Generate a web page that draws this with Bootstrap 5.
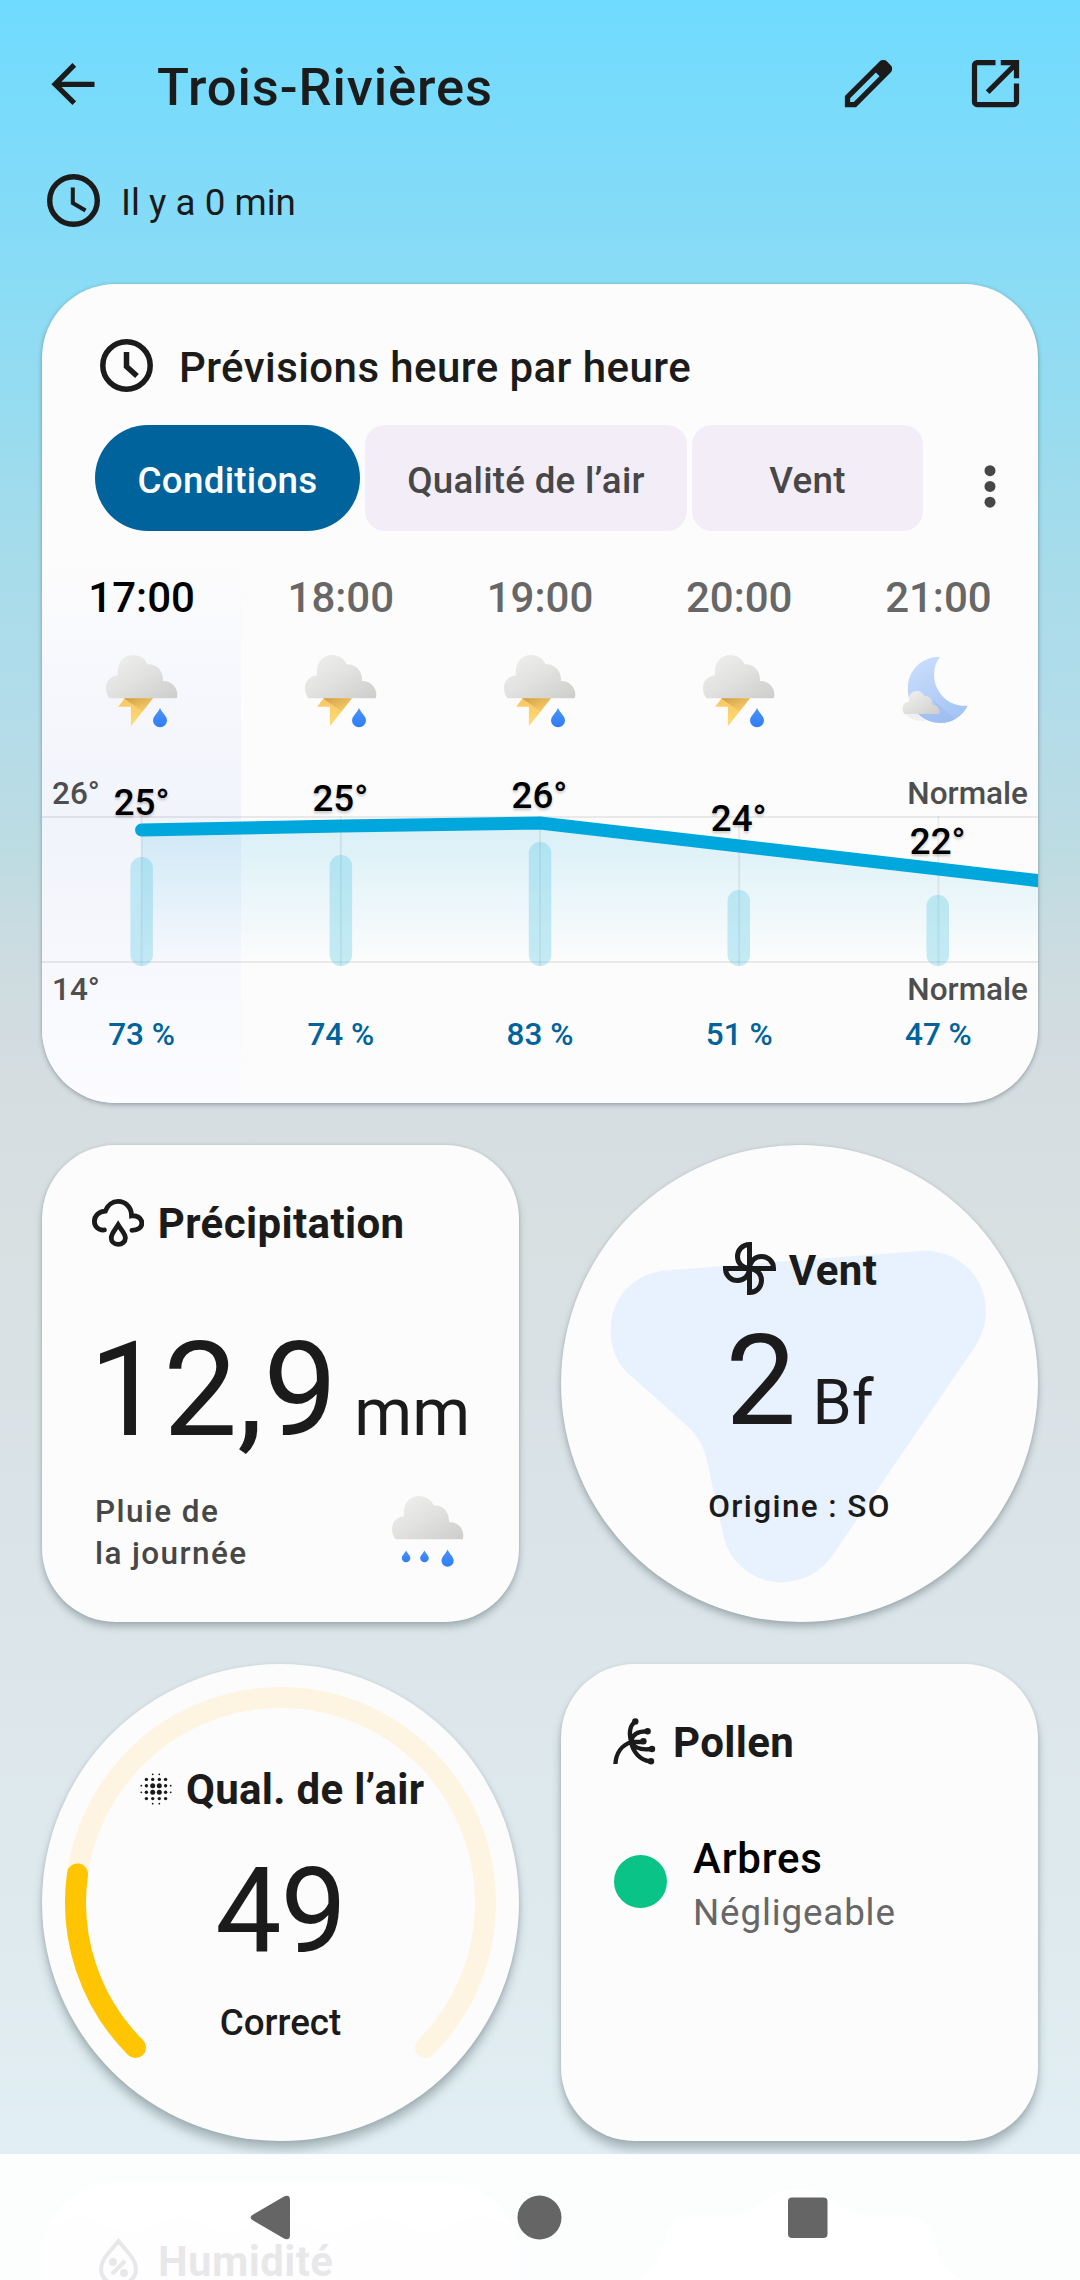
<!DOCTYPE html>
<html lang="fr">
<head>
<meta charset="utf-8">
<meta name="viewport" content="width=device-width, initial-scale=1">
<title>Trois-Rivières</title>
<link href="https://cdn.jsdelivr.net/npm/bootstrap@5.3.0/dist/css/bootstrap.min.css" rel="stylesheet">
<style>
body{margin:0;font-family:Roboto,"Noto Sans",sans-serif;color:#1b1b1b;background:#e2eef3}
.screen{width:1080px;height:2280px;background:linear-gradient(180deg,#6fdbff 0,#7cdbfa 125px,#8cdcf5 300px,#97dcf0 410px,#a7dcea 560px,#b3dcea 710px,#bedce2 860px,#cddce1 960px,#d5dde0 1080px,#d8e0e2 1250px,#dae3e7 1500px,#dce6ea 1660px,#e1eef3 2154px)}
svg{display:block;flex:none}
.fw-md{font-weight:500}
.topbar{padding:52px 53px 0 42px;height:116px}
.page-name{font-size:52.5px;line-height:63px;margin-left:52px;padding-top:4px;letter-spacing:.9px}
.stamp{padding-left:47px;margin-top:58px;height:53px}
.stamp span{font-size:36.75px;line-height:58px;margin-left:21px}
.tile{background:#fcfcfc;border-radius:73.5px;box-shadow:0 2px 5px rgba(70,90,95,.38),0 0 3px rgba(70,90,95,.2)}
.tile-low{box-shadow:0 9px 10px rgba(70,90,95,.34),0 1px 4px rgba(70,90,95,.2)}
.tile-mid{box-shadow:0 5px 7px rgba(70,90,95,.36),0 0 3px rgba(70,90,95,.18)}
.hourly{margin:57px 42px 0;height:819px;padding-top:55px}
.hourly-title{font-size:42px;line-height:57px;margin-left:26px;letter-spacing:.43px}
.tabs-row{margin-top:29px;padding-left:53px;gap:5px;height:106px}
.tab-btn{background:#f2edf7;color:#474747;border-radius:20px;height:106px;font-size:36.75px;letter-spacing:.26px}
.tab-btn span{display:block;padding-top:5px}
.tab-btn.on{background:#00639b;color:#fff;border-radius:53px}
.w-a{width:265px}.w-b{width:322px}.w-c{width:231px}
.kebab{margin-left:52px}
.hours{height:572px}
.hour-col{color:#676767}
.hour-col:first-child{color:#000;background:linear-gradient(180deg,rgba(241,245,253,0) 5%,#f7f8fd 25%,#f1f4fb 52%,#f7f8fd 76%,#fcfcff 100%);border-radius:0 0 0 73.5px}
.hour-lbl{font-size:42px;line-height:50px;margin:42px 0 32px}
.pop{font-size:31.5px;line-height:38px;margin-top:288px;color:#00639b}
.chart text{font-family:Roboto,sans-serif;font-weight:500}
.deg{font-size:36.75px;text-shadow:0 2px 3px rgba(0,0,0,.22)}
.lim{font-size:31.5px;fill:#4e4e4e}
.tiles{margin:42px 42px 0;display:grid;grid-template-columns:477px 477px;gap:42px}
.sq{height:477px}
.head{font-size:42px;font-weight:700;line-height:50px;letter-spacing:.38px}
.big{font-size:132px;line-height:132px}
.unit{font-size:63px;line-height:0}
.round-tile{border-radius:50%}
.sub{font-size:31.5px;letter-spacing:1.4px}
.pad-rain{padding:54px 55px 0 50px}
.pad-wind{padding-top:97px}
.pad-aqi{padding-top:101px}
.pad-pol{padding:54px 0 0 52px}
.dot-lvl{width:53px;height:53px;border-radius:50%;background:#0ac386;margin:22px 26px 0 1px}
.lvl-name{font-size:42px;line-height:50px;color:#000;letter-spacing:.8px;margin-top:1px}
.lvl-val{font-size:36.75px;line-height:44px;margin-top:7px;color:#676767;letter-spacing:.85px}
.navi{height:126px;background:rgba(255,255,255,.9)}
</style>
</head>
<body>
<svg width="0" height="0" class="position-absolute">
<defs>
<linearGradient id="gc" x1="0" y1="0" x2="1" y2="1"><stop offset="0" stop-color="#f1f1f0"/><stop offset=".5" stop-color="#e1e1e0"/><stop offset="1" stop-color="#cdcdcb"/></linearGradient>
<linearGradient id="gd" x1="0" y1="0" x2="0" y2="1"><stop offset="0" stop-color="#4c93f7"/><stop offset="1" stop-color="#2f7df6"/></linearGradient>
<linearGradient id="gb" x1="0" y1="0" x2="0" y2="1"><stop offset="0" stop-color="#f9c665"/><stop offset="1" stop-color="#ffdc74"/></linearGradient>
<linearGradient id="gs" x1="0" y1="0" x2="1" y2="1"><stop offset="0" stop-color="#c89a45"/><stop offset="1" stop-color="#f6c966" stop-opacity=".3"/></linearGradient>
<linearGradient id="gm" x1="0" y1="0" x2=".6" y2="1"><stop offset="0" stop-color="#cee0fd"/><stop offset="1" stop-color="#a6c5f5"/></linearGradient>
<path id="cloud" d="M3.5 43.3C1.5 41 0 37.5 0 33 0 26 5 21 12 20.3 10.5 8.5 17 0 27 0c7 0 12.5 4 14.5 9.2C50.5 8.5 57.5 15.500 57 26c8.500-.5 16 7.500 14 16 0 1-.5 1.300-1.500 1.300Z" fill="url(#gc)"/>
<path id="drop" d="M7 0C5 5 0 8 0 12.500a7 6.800 0 0 0 14 0C14 8 9 5 7 0Z" fill="url(#gd)"/>
<symbol id="storm" viewBox="0 0 72 73"><use href="#cloud"/><path d="M18.700 43.300 12.100 51.700H24.900V71.300L47 43.300Z" fill="url(#gb)"/><path d="M18 43.300H47L36.500 56.500Z" fill="url(#gs)"/><use href="#drop" x="47" y="53"/></symbol>
<symbol id="night" viewBox="0 0 72 73"><path d="M38 1.700C31 10 30 25 36 35 43 47 54 51.500 65.700 50.800 60 62 50 68 39 68 20 68 5.800 53 5.800 33.500 5.800 15 20 1.500 38 1.700Z" fill="url(#gm)"/><path d="M31 45 53 64C48 67 43 68 39 68 29 68 22 65 16 59H38Z" fill="#97b6ea" opacity=".45"/><path d="M3 59H16C18 62 21 65 24 66 16 67 8 64 3 59Z" fill="#999" opacity=".12"/><use href="#cloud" transform="translate(.6 36) scale(.52 .53)"/></symbol>
</defs>
</svg>

<div class="screen position-relative overflow-hidden">
  <header class="topbar d-flex">
    <svg width="63" height="63" viewBox="0 0 24 24" fill="none" stroke="#1b1b1b" stroke-width="2"><path d="M20 12.300H5.400M12.300 4.900 5 12.300l7.300 7.200"/></svg>
    <div class="page-name fw-md">Trois-Rivières</div>
    <svg class="ms-auto" width="63" height="63" viewBox="0 0 24 24" style="margin-right:64px"><path d="M3 21v-4.250L16.200 3.575q.3-.275.663-.425t.762-.15.775.15.65.45L20.425 5q.3.275.437.65T21 6.400q0 .4-.137.763t-.438.662L7.250 21zm2-2h1.400l9.800-9.775-1.400-1.425L5 17.600z" fill="#1b1b1b" fill-rule="evenodd"/></svg>
    <svg width="63" height="63" viewBox="0 0 24 24" fill="none" stroke="#1b1b1b" stroke-width="2"><path d="M12 4H5a1 1 0 0 0-1 1v14a1 1 0 0 0 1 1h14a1 1 0 0 0 1-1v-7M9 15.300 20 4.300"/><path d="M14 4h6v6"/></svg>
  </header>
  <div class="stamp d-flex">
    <svg width="53" height="53" viewBox="0 0 53 53" fill="none" stroke="#1b1b1b"><circle cx="26.500" cy="26.500" r="23.800" stroke-width="5.400"/><path d="M25.800 13.500V29L38.500 36.500" stroke-width="4"/></svg>
    <span>Il y a 0 min</span>
  </div>

  <section class="hourly tile">
    <div class="d-flex" style="padding-left:58px">
      <svg width="53" height="53" viewBox="0 0 53 53" fill="none" stroke="#1b1b1b"><circle cx="26.500" cy="26.500" r="23.700" stroke-width="5.500"/><path d="M26.500 13V27.500L37 37" stroke-width="5.500"/></svg>
      <div class="hourly-title fw-md">Prévisions heure par heure</div>
    </div>
    <div class="tabs-row d-flex">
      <button class="tab-btn on w-a border-0 fw-md p-0"><span>Conditions</span></button>
      <button class="tab-btn w-b border-0 fw-md p-0"><span>Qualité de l’air</span></button>
      <button class="tab-btn w-c border-0 fw-md p-0"><span>Vent</span></button>
      <svg class="kebab" width="20" height="106" viewBox="0 0 20 106" fill="#474747"><circle cx="10" cy="45.700" r="5.500"/><circle cx="10" cy="61.400" r="5.500"/><circle cx="10" cy="77.200" r="5.500"/></svg>
    </div>
    <div class="hours position-relative">
      <div class="d-flex h-100 text-center fw-md">
        <div class="hour-col flex-fill w-100"><div class="hour-lbl">17:00</div><svg class="mx-auto" width="72" height="73"><use href="#storm"/></svg><div class="pop">73 %</div></div>
        <div class="hour-col flex-fill w-100"><div class="hour-lbl">18:00</div><svg class="mx-auto" width="72" height="73"><use href="#storm"/></svg><div class="pop">74 %</div></div>
        <div class="hour-col flex-fill w-100"><div class="hour-lbl">19:00</div><svg class="mx-auto" width="72" height="73"><use href="#storm"/></svg><div class="pop">83 %</div></div>
        <div class="hour-col flex-fill w-100"><div class="hour-lbl">20:00</div><svg class="mx-auto" width="72" height="73"><use href="#storm"/></svg><div class="pop">51 %</div></div>
        <div class="hour-col flex-fill w-100"><div class="hour-lbl">21:00</div><svg class="mx-auto" width="72" height="73"><use href="#night"/></svg><div class="pop">47 %</div></div>
      </div>
      <svg class="chart position-absolute top-0 start-0" width="996" height="572" viewBox="42 531 996 572">
        <defs>
          <linearGradient id="area" gradientUnits="userSpaceOnUse" x1="0" y1="820" x2="0" y2="962"><stop offset="0" stop-color="#00a7dc" stop-opacity=".15"/><stop offset="1" stop-color="#00a7dc" stop-opacity="0"/></linearGradient>
        </defs>
        <path d="M42 817H1038M42 962H1038" stroke="#000" stroke-opacity=".075" stroke-width="2"/>
        <path d="M141.600 830 340.800 826 540 823 739.200 846 938.400 869 1038 880V962H141.600Z" fill="url(#area)"/>
        <path d="M141.600 816V966M340.800 816V966M540 816V966M739.200 816V966M938.400 816V966" stroke="#000" stroke-opacity=".065" stroke-width="2"/>
        <g fill="#56c8e5" fill-opacity=".33">
          <rect x="130.400" y="857" width="22.500" height="109" rx="11.200"/>
          <rect x="329.600" y="855" width="22.500" height="111" rx="11.200"/>
          <rect x="528.800" y="842" width="22.500" height="124" rx="11.200"/>
          <rect x="727.500" y="890" width="22.500" height="76" rx="11.200"/>
          <rect x="926.500" y="895" width="22.500" height="71" rx="11.200"/>
        </g>
        <path d="M141.600 830 340.800 826 540 823 739.200 846 938.400 869 1050 882" fill="none" stroke="#00a7dc" stroke-width="13" stroke-linecap="round" stroke-linejoin="round"/>
        <g class="deg" text-anchor="middle" fill="#000">
          <text x="141.600" y="815">25°</text><text x="340.300" y="811">25°</text><text x="539.500" y="808">26°</text><text x="738.700" y="831">24°</text><text x="937.700" y="854">22°</text>
        </g>
        <g class="lim"><text x="52" y="804">26°</text><text x="52" y="1000">14°</text><text x="1028" y="804" text-anchor="end">Normale</text><text x="1028" y="1000" text-anchor="end">Normale</text></g>
      </svg>
    </div>
  </section>

  <main class="tiles">
    <section class="tile tile-mid sq pad-rain">
      <div class="d-flex">
        <svg width="52.300" height="48.200" viewBox="268 225 152 140" fill="none" stroke="#1b1b1b" stroke-width="14" stroke-linecap="round"><path d="M304 315C285 317 275 303 275 290 275 273 288 261 307 260 313 243 327 232 344 232 364 232 383 248 383 274 396 272 413 279 413 295 413 308 402 316 384 316"/><path d="M344 300C334 316 324 326 324 338 324 349 333 357 344 357 355 357 365 349 365 338 365 326 354 316 344 300Z" stroke-linecap="butt"/></svg>
        <div class="head" style="margin-left:13.500px">Précipitation</div>
      </div>
      <div class="big text-nowrap" style="margin:75px 0 0 -3px">12,9 <span class="unit" style="margin-left:-16px;font-size:66px">mm</span></div>
      <div class="d-flex justify-content-between" style="margin-top:35px">
        <div class="sub fw-md" style="line-height:42px;margin-left:3px;color:#474747">Pluie de<br>la journée</div>
        <svg width="72" height="73" viewBox="0 0 72 73" style="margin-top:5px"><use href="#cloud"/><use href="#drop" transform="translate(9.800 54.500) scale(.61)"/><use href="#drop" transform="translate(28.200 54.500) scale(.61)"/><use href="#drop" transform="translate(49.500 53.500) scale(.87 .9)"/></svg>
      </div>
    </section>

    <section class="tile tile-mid sq round-tile position-relative pad-wind">
      <svg class="position-absolute top-0 start-0" width="477" height="477" viewBox="61 72 1385 1385"><path d="M370 436 1110 379C1210 375 1295 450 1295 555 1295 590 1283 625 1265 655L845 1270C810 1315 760 1342 700 1342 620 1340 545 1285 530 1195L485 990C475 945 460 920 430 890L255 735C222 702 205 660 205 610 205 520 270 442 370 436Z" fill="#e8f2ff"/></svg>
      <div class="position-relative text-center">
        <div class="d-flex justify-content-center" style="padding-left:1px">
          <svg width="53" height="53" viewBox="0 0 53 53" fill="none" stroke="#1b1b1b" stroke-width="5"><path id="bl" d="M26.500 26.500V2.500C19 2.500 14.500 8.500 14.500 14.500 14.500 21 19 26 26.500 26.500Z"/><use href="#bl" transform="rotate(90 26.500 26.500)"/><use href="#bl" transform="rotate(180 26.500 26.500)"/><use href="#bl" transform="rotate(270 26.500 26.500)"/></svg>
          <div class="head" style="line-height:57px;margin-left:13px">Vent</div>
        </div>
        <div class="big" style="font-size:126px;line-height:126px;margin-top:19px">2 <span class="unit" style="margin-left:-15px">Bf</span></div>
        <div class="sub fw-md" style="line-height:40px;margin-top:43px">Origine : SO</div>
      </div>
    </section>

    <section class="tile tile-low sq round-tile position-relative pad-aqi">
      <svg class="position-absolute top-0 start-0" width="477" height="477" viewBox="0 0 477 477" fill="none" stroke-width="21" stroke-linecap="round"><path d="M93.500 383.500A205 205 0 1 1 383.500 383.500" stroke="#fdf5e2"/><path d="M93.500 383.500A205 205 0 0 1 35.500 210" stroke="#ffc402"/></svg>
      <div class="position-relative text-center">
        <div class="d-flex" style="padding-left:98px">
          <svg width="32" height="32" viewBox="0 0 32 32" style="margin-top:8px" fill="#1b1b1b"><circle cx="12.700" cy="12.700" r="2.500"/><circle cx="19.300" cy="12.700" r="2.500"/><circle cx="12.700" cy="19.300" r="2.500"/><circle cx="19.300" cy="19.300" r="2.500"/><circle cx="6.400" cy="6.400" r="1.700"/><circle cx="12.700" cy="6.400" r="1.700"/><circle cx="19.300" cy="6.400" r="1.700"/><circle cx="25.600" cy="6.400" r="1.700"/><circle cx="6.400" cy="12.700" r="1.700"/><circle cx="6.400" cy="19.300" r="1.700"/><circle cx="25.600" cy="12.700" r="1.700"/><circle cx="25.600" cy="19.300" r="1.700"/><circle cx="6.400" cy="25.600" r="1.700"/><circle cx="12.700" cy="25.600" r="1.700"/><circle cx="19.300" cy="25.600" r="1.700"/><circle cx="25.600" cy="25.600" r="1.700"/><circle cx="12.700" cy="1.300" r=".9"/><circle cx="19.300" cy="1.300" r=".9"/><circle cx="12.700" cy="30.700" r=".9"/><circle cx="19.300" cy="30.700" r=".9"/><circle cx="1.300" cy="12.700" r=".9"/><circle cx="1.300" cy="19.300" r=".9"/><circle cx="30.700" cy="12.700" r=".9"/><circle cx="30.700" cy="19.300" r=".9"/></svg>
          <div class="head text-nowrap" style="margin-left:14px;letter-spacing:.3px">Qual. de l’air</div>
        </div>
        <div style="font-size:118px;line-height:118px;margin-top:38px;letter-spacing:-1px">49</div>
        <div class="fw-md" style="font-size:36.75px;line-height:44px;margin-top:30px">Correct</div>
      </div>
    </section>

    <section class="tile tile-low sq pad-pol">
      <div class="d-flex">
        <svg width="44" height="48" viewBox="0 0 44 48" fill="none" stroke="#1b1b1b" stroke-width="4.300"><path d="M2.400 46C3 35 9 27 18.300 24M18.500 25C15.500 15 17 8 21.500 4M18 23C20 15 26 13 34 13.300M18 24H30M18 24C22 31 30 32 38 31M18 24C20 34 27 42 37 43.300"/><g fill="#1b1b1b" stroke="none"><circle cx="22.300" cy="3.500" r="3.200"/><circle cx="34.600" cy="13.300" r="3.200"/><circle cx="30.400" cy="23.200" r="3.200"/><circle cx="39" cy="31" r="3.200"/><circle cx="38" cy="43.300" r="3.200"/></g></svg>
        <div class="head" style="margin-left:16px">Pollen</div>
      </div>
      <div class="d-flex" style="margin-top:65px">
        <div class="dot-lvl"></div>
        <div><div class="lvl-name fw-md">Arbres</div><div class="lvl-val">Négligeable</div></div>
      </div>
    </section>

    <section class="sq position-relative overflow-hidden" style="border-radius:73.5px;background:#fcfcfc">
      <svg class="position-absolute top-0 start-0" width="477" height="477"><path d="M0 49C18 39 26 34.500 37 34.500 60 34.500 65 49 87 49S115 34.500 138 34.500 165 49 187 49 215 34.500 238 34.500 265 49 287 49 315 34.500 338 34.500 365 49 387 49 415 34.500 438 34.500C455 34.500 465 42 477 49V477H0Z" fill="#f1e6fb"/></svg>
      <div class="position-relative d-flex" style="padding:54px 0 0 56px">
        <svg width="42" height="50" viewBox="0 0 42 50" fill="none" stroke="#1b1b1b" stroke-width="4"><path d="M20.500 4C12 15 3 22 3 32A17.500 16 0 0 0 38 32C38 22 29 15 20.500 4ZM14 37 27 24"/><circle cx="15" cy="25" r="2"/><circle cx="26" cy="36" r="2"/></svg>
        <div class="head" style="margin-left:18px">Humidité</div>
      </div>
    </section>
    <section class="sq"><svg width="477" height="97" viewBox="561 2183 477 97"><path d="M635 2280C655 2272 657 2262 663 2245 672 2222 672 2216 700 2216.500 740 2218 745 2216 765 2200 785 2186 812 2186 832 2200 855 2216 860 2218 900 2216.500 925 2216 928 2222 935 2245 942 2262 943 2272 965 2280Z" fill="#fcfcfc"/></svg></section>
  </main>

  <nav class="navi position-absolute bottom-0 start-0 w-100">
    <svg width="1080" height="126" fill="#656565"><path d="M254 60 284 42.500Q290 40 290 46V81Q290 87 284 84.500L254 67Q247 63.500 254 60Z"/><circle cx="539.500" cy="63.500" r="22"/><rect x="788" y="43.500" width="39.500" height="40.500" rx="4"/></svg>
  </nav>
</div>
<script src="https://cdn.jsdelivr.net/npm/bootstrap@5.3.0/dist/js/bootstrap.bundle.min.js"></script>
</body>
</html>
